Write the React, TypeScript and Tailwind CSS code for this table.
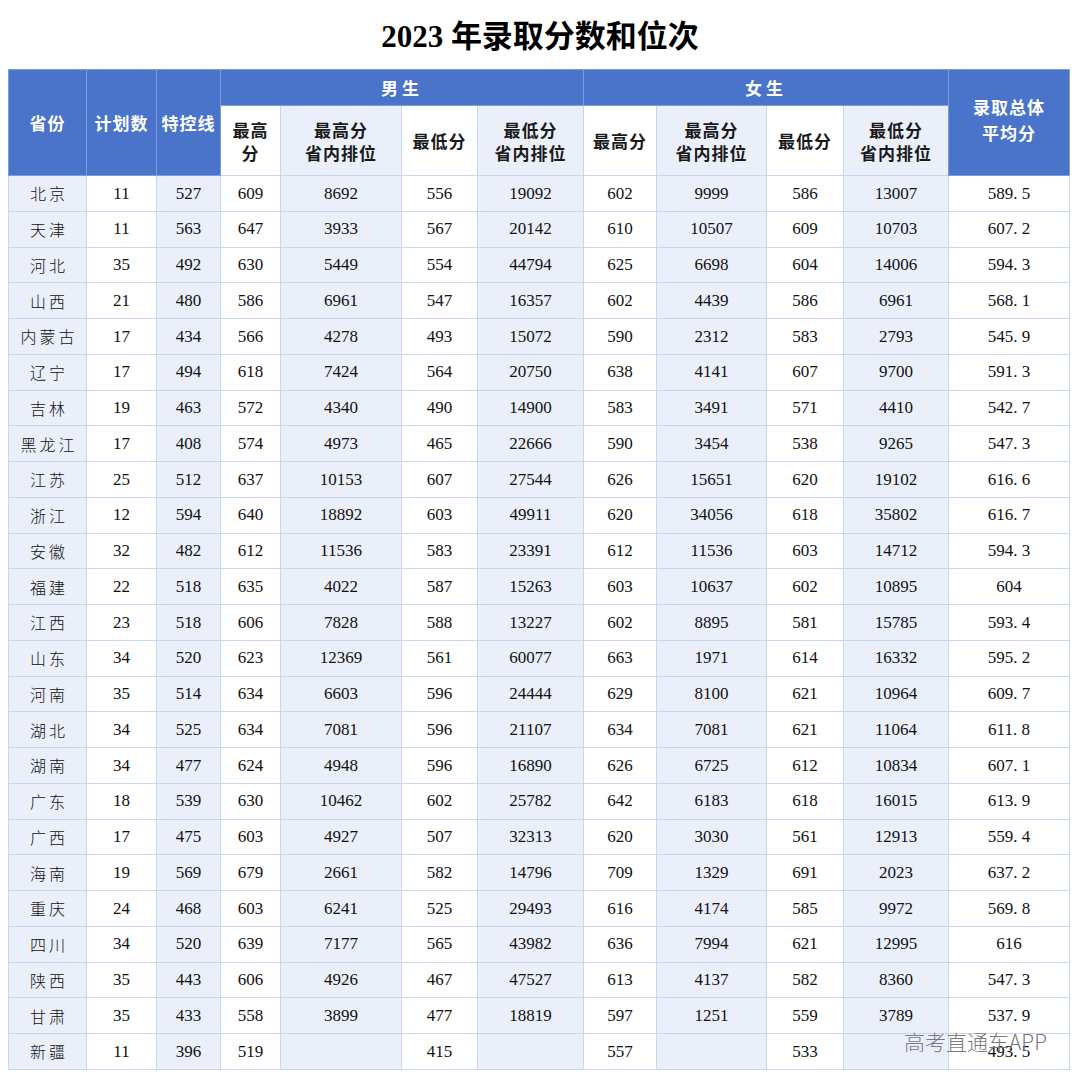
import type { FC } from "react";

type Row = [string, ...(string | number)[]];

const rows: Row[] = [
  ["北京", 11, 527, 609, 8692, 556, 19092, 602, 9999, 586, 13007, "589.5"],
  ["天津", 11, 563, 647, 3933, 567, 20142, 610, 10507, 609, 10703, "607.2"],
  ["河北", 35, 492, 630, 5449, 554, 44794, 625, 6698, 604, 14006, "594.3"],
  ["山西", 21, 480, 586, 6961, 547, 16357, 602, 4439, 586, 6961, "568.1"],
  ["内蒙古", 17, 434, 566, 4278, 493, 15072, 590, 2312, 583, 2793, "545.9"],
  ["辽宁", 17, 494, 618, 7424, 564, 20750, 638, 4141, 607, 9700, "591.3"],
  ["吉林", 19, 463, 572, 4340, 490, 14900, 583, 3491, 571, 4410, "542.7"],
  ["黑龙江", 17, 408, 574, 4973, 465, 22666, 590, 3454, 538, 9265, "547.3"],
  ["江苏", 25, 512, 637, 10153, 607, 27544, 626, 15651, 620, 19102, "616.6"],
  ["浙江", 12, 594, 640, 18892, 603, 49911, 620, 34056, 618, 35802, "616.7"],
  ["安徽", 32, 482, 612, 11536, 583, 23391, 612, 11536, 603, 14712, "594.3"],
  ["福建", 22, 518, 635, 4022, 587, 15263, 603, 10637, 602, 10895, "604"],
  ["江西", 23, 518, 606, 7828, 588, 13227, 602, 8895, 581, 15785, "593.4"],
  ["山东", 34, 520, 623, 12369, 561, 60077, 663, 1971, 614, 16332, "595.2"],
  ["河南", 35, 514, 634, 6603, 596, 24444, 629, 8100, 621, 10964, "609.7"],
  ["湖北", 34, 525, 634, 7081, 596, 21107, 634, 7081, 621, 11064, "611.8"],
  ["湖南", 34, 477, 624, 4948, 596, 16890, 626, 6725, 612, 10834, "607.1"],
  ["广东", 18, 539, 630, 10462, 602, 25782, 642, 6183, 618, 16015, "613.9"],
  ["广西", 17, 475, 603, 4927, 507, 32313, 620, 3030, 561, 12913, "559.4"],
  ["海南", 19, 569, 679, 2661, 582, 14796, 709, 1329, 691, 2023, "637.2"],
  ["重庆", 24, 468, 603, 6241, 525, 29493, 616, 4174, 585, 9972, "569.8"],
  ["四川", 34, 520, 639, 7177, 565, 43982, 636, 7994, 621, 12995, "616"],
  ["陕西", 35, 443, 606, 4926, 467, 47527, 613, 4137, 582, 8360, "547.3"],
  ["甘肃", 35, 433, 558, 3899, 477, 18819, 597, 1251, 559, 3789, "537.9"],
  ["新疆", 11, 396, 519, "", 415, "", 557, "", 533, "", "493.5"],
];

const widths = [78, 70, 64, 60, 121, 76, 106, 73, 110, 77, 105, 121];

const sans = "font-['Noto_Sans_CJK_SC','Noto_Sans',sans-serif]";
const serif = "font-['Liberation_Serif','Noto_Sans_CJK_SC',serif]";

const blueCell =
  "bg-[#4a74c9] text-white font-bold text-[17px] tracking-[1px] border border-[#7f9cdb] text-center align-middle";

const subCell = (i: number) =>
  `${i % 2 === 0 ? "bg-[#eaeff9]" : "bg-white"} text-[#1a1a1a] font-bold text-[17px] tracking-[1px] leading-[23px] border border-[#c9d6ef] text-center align-middle`;

const App: FC = () => {
  return (
    <div className="relative w-[1080px] h-[1081px] bg-white">
      <div className="h-[69px] flex items-center justify-center pt-[6px]">
        <h1 className="text-[31px] font-bold text-black font-['Liberation_Serif','Noto_Sans_CJK_SC',serif]">
          2023 年录取分数和位次
        </h1>
      </div>

      <table
        className={`ml-[8px] w-[1061px] table-fixed border-collapse border border-[#a9bfe7] ${sans}`}
      >
        <colgroup>
          {widths.map((w, i) => (
            <col key={i} style={{ width: w }} />
          ))}
        </colgroup>
        <thead>
          <tr className="h-[36px]">
            <th rowSpan={2} className={blueCell}>省份</th>
            <th rowSpan={2} className={blueCell}>计划数</th>
            <th rowSpan={2} className={blueCell}>特控线</th>
            <th colSpan={4} className={`${blueCell} tracking-[4px]`}>男生</th>
            <th colSpan={4} className={`${blueCell} tracking-[4px]`}>女生</th>
            <th rowSpan={2} className={`${blueCell} leading-[26px] pb-[6px]`}>
              录取总体
              <br />
              平均分
            </th>
          </tr>
          <tr className="h-[70px]">
            <th className={subCell(1)}>
              最高
              <br />
              分
            </th>
            <th className={subCell(0)}>
              最高分
              <br />
              省内排位
            </th>
            <th className={subCell(1)}>最低分</th>
            <th className={subCell(0)}>
              最低分
              <br />
              省内排位
            </th>
            <th className={subCell(1)}>最高分</th>
            <th className={subCell(0)}>
              最高分
              <br />
              省内排位
            </th>
            <th className={subCell(1)}>最低分</th>
            <th className={subCell(0)}>
              最低分
              <br />
              省内排位
            </th>
          </tr>
        </thead>
        <tbody>
          {rows.map((r) => (
            <tr key={r[0]} className="h-[35.76px]">
              {r.map((v, i) => (
                <td
                  key={i}
                  className={`${i % 2 === 0 && i !== 11 ? "bg-[#eaeff9]" : "bg-white"} border border-[#c9d6ef] text-center align-middle text-[#111] ${
                    i === 0
                      ? `${sans} text-[16px] tracking-[3px] pl-[3px] font-light`
                      : `${serif} text-[17px]`
                  }`}
                >
                  {i === 11 ? String(v).replace(".", ". ") : v}
                </td>
              ))}
            </tr>
          ))}
        </tbody>
      </table>

      {/* watermark */}
      <div className="absolute left-[904px] top-[1028px] text-[21px] leading-[26px] text-[#7a7a7a] font-['Noto_Sans_CJK_SC',sans-serif] font-light">
        高考直通车APP
      </div>
    </div>
  );
};

export default App;
